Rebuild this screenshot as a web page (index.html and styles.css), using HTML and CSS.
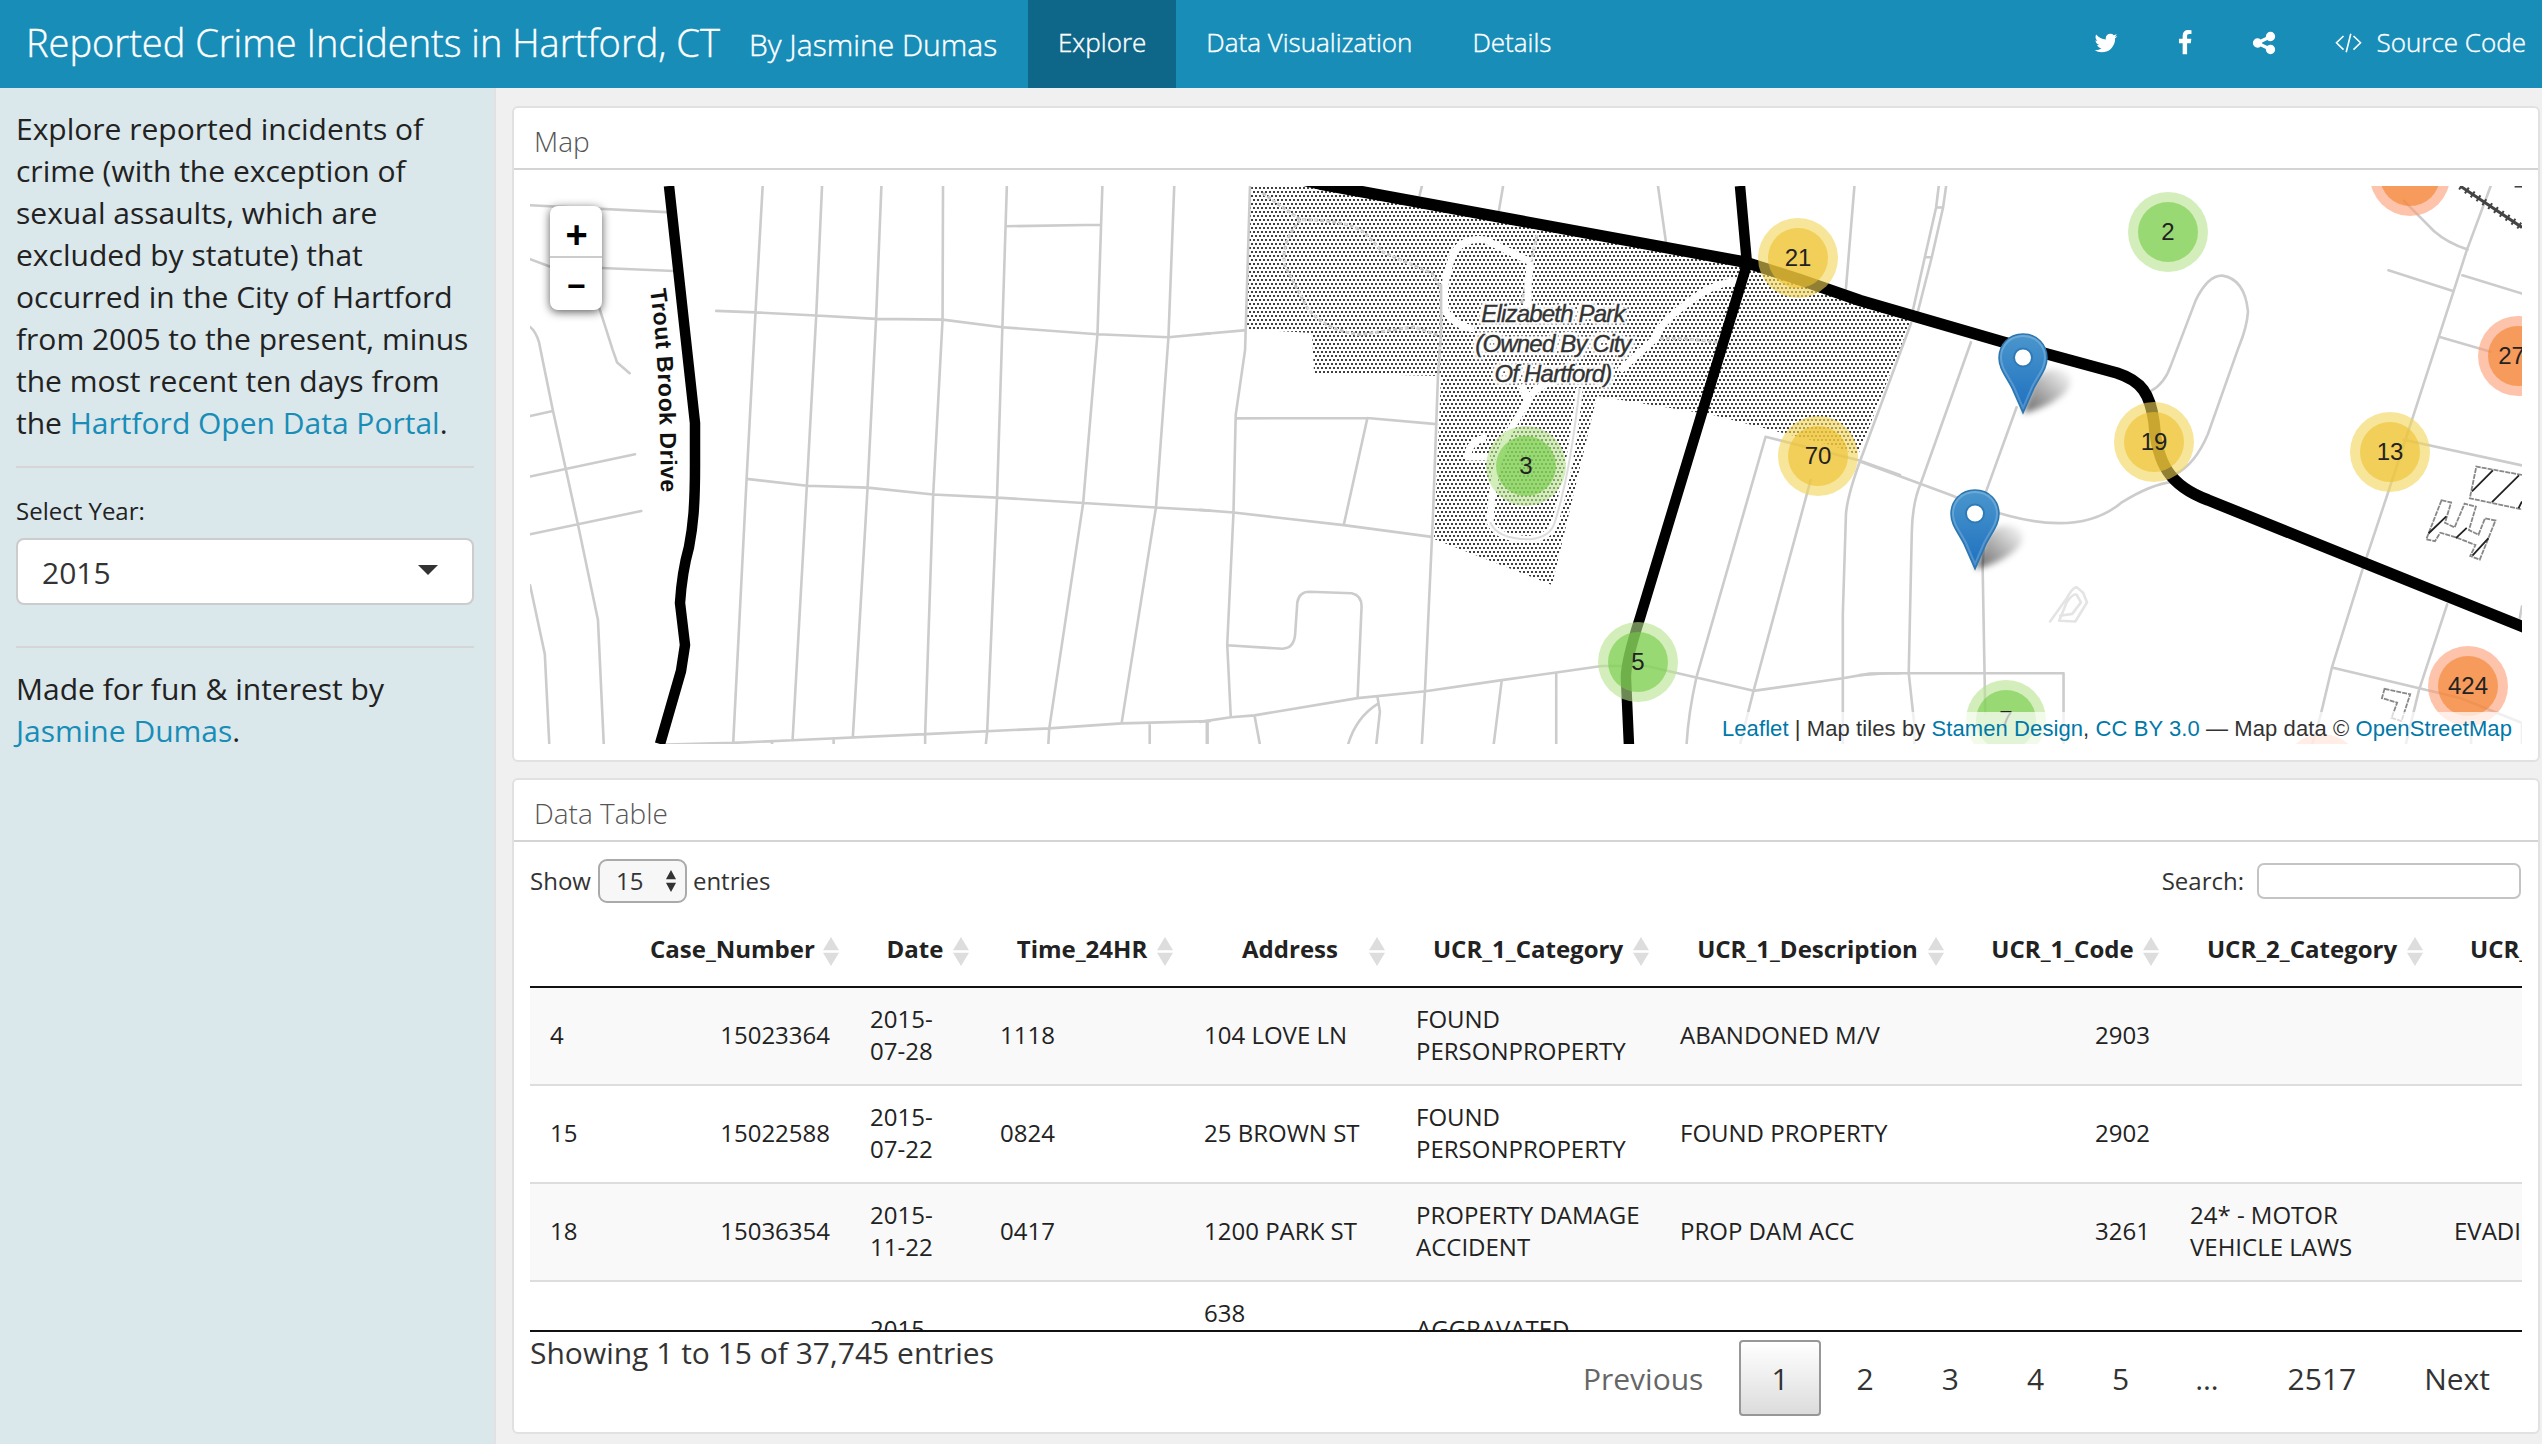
FILE: index.html
```html
<!DOCTYPE html>
<html lang="en">
<head>
<meta charset="utf-8">
<title>Reported Crime Incidents in Hartford, CT</title>
<link rel="stylesheet" href="styles.css">
</head>
<body>
<header class="navbar">
  <a class="brand">Reported Crime Incidents in Hartford, CT</a>
  <span class="byline">By Jasmine Dumas</span>
  <nav class="tabs">
    <a class="tab active">Explore</a>
    <a class="tab">Data Visualization</a>
    <a class="tab">Details</a>
  </nav>
  <div class="social">
    <a class="social-link"><svg class="icon" viewBox="0 0 1792 1792"><path d="M1684 408q-67 98-162 167 1 14 1 42 0 130-38 259.5t-115.5 248.5-184.5 210.5-258 146-323 54.5q-271 0-496-145 35 4 78 4 225 0 401-138-105-2-188-64.5t-114-159.5q33 5 61 5 43 0 85-11-112-23-185.5-111.5t-73.5-205.5v-4q68 38 146 41-66-44-105-115t-39-154q0-88 44-163 121 149 294.5 238.5t371.5 99.5q-8-38-8-74 0-134 94.5-228.5t228.5-94.5q140 0 236 102 109-21 205-78-37 115-142 178 93-10 186-50z"/></svg></a>
    <a class="social-link"><svg class="icon" viewBox="0 0 1792 1792"><path d="M1343 12v264h-157q-86 0-116 36t-30 108v189h293l-39 296h-254v759h-306v-759h-255v-296h255v-218q0-186 104-288.5t277-102.5q147 0 228 12z"/></svg></a>
    <a class="social-link"><svg class="icon" viewBox="0 0 1792 1792"><path d="M1344 1024q133 0 226.5 93.5t93.5 226.5-93.5 226.5-226.5 93.5-226.5-93.5-93.5-226.5q0-12 2-34l-360-180q-92 86-218 86-133 0-226.5-93.5t-93.5-226.5 93.5-226.5 226.5-93.5q126 0 218 86l360-180q-2-22-2-34 0-133 93.5-226.5t226.5-93.5 226.5 93.5 93.5 226.5-93.5 226.5-226.5 93.5q-126 0-218-86l-360 180q2 22 2 34t-2 34l360 180q92-86 218-86z"/></svg></a>
    <a class="source"><svg class="code" viewBox="0 0 27 20"><path d="M8.5 3L1.5 9.8L8.5 16.6M18.500 3L25.500 9.800L18.500 16.600M15.800 .8L11.200 19.200"/></svg>Source Code</a>
  </div>
</header>

<div class="layout">
  <aside class="sidebar">
    <p>Explore reported incidents of crime (with the exception of sexual assaults, which are excluded by statute) that occurred in the City of Hartford from 2005 to the present, minus the most recent ten days from the <a>Hartford Open Data Portal</a>.</p>
    <hr>
    <label class="year-label">Select Year:</label>
    <div class="year-select"><span>2015</span><i class="caret"></i></div>
    <hr class="second">
    <p>Made for fun &amp; interest by <a>Jasmine Dumas</a>.</p>
  </aside>

  <main class="content">
    <section class="card map-card">
      <h2>Map</h2>
      <div class="map">
        <svg class="tiles" width="1992" height="558" viewBox="0 0 1992 558">
          <defs>
            <pattern id="park" width="4" height="8" patternUnits="userSpaceOnUse">
              <path fill="#404040" d="M1 1h2v2H1zM0 5h1v2H0zM3 5h1v2H3z"/>
            </pattern>
          </defs>
          <path fill="url(#park)" d="M720 0H775L1214.600 74L1381 135L1328 269L1304 260L1183 229L1067 210L1022 399L904 353L911 190L784 187L782 147L716 143Z"/>
          <g class="trail" transform="translate(670 -16) scale(.4464 .3827)">
            <path class="dotted" d="M140 60L225 130Q330 130 370 165L410 215L520 270L540 310M225 130Q180 190 190 250L240 360Q280 420 360 430L480 410L540 435M755 170L720 350M1030 440H1080L1160 450"/>
            <path d="M740 240L640 183Q590 175 570 215Q540 290 550 370Q575 410 615 415M740 240L735 300V360M720 560L735 600L690 690Q655 780 650 920Q665 965 740 965Q785 960 795 920Q830 790 850 570M1200 290Q1140 300 1090 350Q1030 400 1020 440L940 525M640 700Q600 710 600 750H650M740 590Q760 560 800 550"/>
            <path class="edge" d="M650 920Q665 965 740 965Q785 960 795 920Q830 790 850 570"/>
          </g>
          <g class="street" transform="translate(-20 -16) scale(.4464 .3827)">
            <path d="M45 92L350 110M45 233L95 255M205 256L368 264M200 360L230 470L240 503L268 531M45 410Q58 422 65 450L96 628L152 925L197 1175L210 1500M45 643L96 630M45 801L280 743M45 952L294 891M45 1085L78 1265L88 1500M566 42L550 372L530 807L500 1497M699 42L686 380L665 825L633 1490M832 42L820 389L801 830L768 1482M970 42L969 391L948 848L930 1474V1500M1113 42L1103 411L1091 856L1069 1466L1066 1500M1327 42L1316 429L1284 870L1208 1459L1206 1500M1488 42L1475 437L1447 882L1370 1446M1110 147L1322 143M462 368L550 372L686 380L820 389L969 391L1103 411L1316 429L1475 437L1568 427M530 807L665 825L801 830L948 848L1091 856L1284 870L1447 882L1568 890M350 1501L500 1497L633 1490L930 1474L1208 1459L1370 1446L1568 1440M1433 1448V1500M1561 1440V1500M725 1486V1500M587 1493V1500"/>
          </g>
          <g class="street" transform="translate(670 -16) scale(.4464 .3827)">
            <path d="M112 42L101 470L80 640L75 895L61 1240L69 1430M0 429L98 419M80 649L375 648L530 664M375 648L322 928M0 888L75 895L322 928L515 958M540 300V420L533 540L522 900L504 1360L497 1500M61 1242L185 1251Q210 1250 213 1215L218 1130Q222 1102 245 1102L340 1106Q362 1112 362 1140L353 1380M0 1442L69 1430L122 1425L353 1380L505 1362L676 1333L798 1313L900 1296L1000 1296L1112 1326L1240 1361L1440 1328L1500 1316L1568 1315M17 1442V1500M122 1425L134 1500M398 1395Q350 1430 332 1500M398 1380L403 1415L395 1500M676 1333L658 1500M798 1313V1500M497 42L492 66M679 42L669 110M1026 42L1044 190M1466 42L1447 310M1568 797L1480 760L1267 697L1112 1326Q1094 1420 1090 1500M1368 810L1240 1361L1210 1500M1593 400L1482 750Q1450 850 1447 900L1440 1160V1500"/>
          </g>
          <g class="street" transform="translate(1330 -16) scale(.43495 .38265)">
            <path d="M181 42L175 98L149 228L118 385M198 42L191 98L165 228L133 370M175 98H191M149 228H165M255 450L140 818Q120 870 119 950L112 1315L125 1450V1500M360 620L290 840L282 1040L288 1420M0 762L210 850Q480 985 600 870Q670 820 720 815M668 578Q700 560 715 510L772 340Q800 275 833 276Q885 285 892 370Q890 410 870 465L800 690Q770 770 725 795M0 1320L60 1315H468V1500M1450 42L1395 210L1365 316L1270 650L1215 840L1155 1045L1085 1300L1060 1420L1040 1500M1250 80L1320 160Q1350 190 1397 208M1215 262L1365 317M1385 275L1522 323M1335 437L1450 475M1250 705L1522 772M1350 1135L1285 1360L1255 1500M1085 1300L1380 1380L1522 1445V1500M1405 1450V1500M1517 1170L1522 1140"/>
            <path class="faint" d="M437 1180L475 1120Q492 1085 500 1092L513 1105L522 1130L495 1180L458 1178L475 1130Q490 1105 498 1110L508 1130L488 1160L460 1165"/>
          </g>
          <g class="building" transform="translate(1330 -16) scale(.43495 .38265)">
            <path d="M1522 797L1417 775L1402 858L1522 887M1337 863L1359 869L1345 922L1367 934L1390 872L1416 880L1400 941L1422 953L1437 910L1461 916L1425 1018L1403 1009L1415 980L1370 960L1334 948L1322 970L1302 965ZM1206 1356L1265 1370L1245 1440L1222 1432L1235 1392L1200 1380Z"/>
            <path class="hatch" d="M1455 785L1407 840M1515 798L1453 868M1522 866L1514 884M1348 905L1307 950M1395 935L1370 962M1445 962L1408 1008"/>
            <path class="rail" d="M1380 42L1522 150"/><path class="ties" d="M1380 42L1522 150"/><path class="rail" d="M1505 42H1522"/>
          </g>
          <path class="road" d="M139 0L165 237V279C165 321 163 340 159 361Q152 386 150 417L155 459L151 485L130 558"/>
          <path class="road" d="M1210 0L1217 78L1110 432Q1095 478 1096 493L1099 560"/>
          <path class="road wide" d="M760 -9L790 -2L1214.600 76L1268 93L1330 114.500L1473 156L1587 187C1612 195 1620 208 1624 236C1627 278 1640 300 1678 314L1996 442"/>
          <path id="trout" fill="none" d="M120 104Q130 170 131 312"/>
          <text class="road-name"><textPath href="#trout" textLength="203">Trout Brook Drive</textPath></text>
        </svg>
        <div class="park-name">Elizabeth Park<br>(Owned By City<br>Of Hartford)</div>

        <div class="cluster medium" style="left:1268px;top:72px"><b>21</b></div>
        <div class="cluster medium" style="left:1288px;top:270px"><b>70</b></div>
        <div class="cluster small" style="left:996px;top:280px"><b>3</b></div>
        <div class="cluster small" style="left:1108px;top:476px"><b>5</b></div>
        <div class="cluster small" style="left:1638px;top:46px"><b>2</b></div>
        <div class="cluster large" style="left:1880px;top:-10px"><b></b></div>
        <div class="cluster large cut" style="left:1988px;top:170px"><b>27</b></div>
        <div class="cluster medium" style="left:1624px;top:256px"><b>19</b></div>
        <div class="cluster medium" style="left:1860px;top:266px"><b>13</b></div>
        <div class="cluster large" style="left:1938px;top:500px"><b>424</b></div>
        <div class="cluster small" style="left:1476px;top:534px"><b>7</b></div>
        <div class="cluster large" style="left:1792px;top:588px"><b></b></div>

        <svg class="pins" width="1992" height="558" viewBox="0 0 1992 558">
          <defs>
            <linearGradient id="pinFill" x1="0" y1="0" x2="0" y2="1"><stop offset="0" stop-color="#4a96cd"/><stop offset="1" stop-color="#1e70bf"/></linearGradient>
            <linearGradient id="shade" x1="0" y1="1" x2="1" y2="0"><stop offset="0" stop-color="#000" stop-opacity=".6"/><stop offset="1" stop-color="#000" stop-opacity="0"/></linearGradient>
            <filter id="soft" x="-50%" y="-50%" width="200%" height="200%"><feGaussianBlur stdDeviation="3"/></filter>
            <g id="pin">
              <path fill="url(#shade)" filter="url(#soft)" d="M25 80L36 46Q52 30 70 40Q78 52 62 64Q46 76 25 80Z"/>
              <path fill="url(#pinFill)" stroke="#2c77b0" stroke-width="1.500" d="M25 1C11 1 1 11.500 1 25C1 36 8 43 14 55L25 80L36 55C42 43 49 36 49 25C49 11.500 39 1 25 1Z"/>
              <path fill="none" stroke="#fff" stroke-opacity=".2" stroke-width="2" d="M25 3C12 3 3 12.500 3 25C3 35 10 42 16 54L25 75L34 54C40 42 47 35 47 25C47 12.500 38 3 25 3Z"/>
              <circle cx="25" cy="24.500" r="9" fill="#fff" stroke="#2f7ab6" stroke-width="2"/>
            </g>
          </defs>
          <use href="#pin" x="1468" y="147"/>
          <use href="#pin" x="1420" y="303"/>
        </svg>

        <div class="zoom"><a>+</a><a>−</a></div>
        <div class="attribution"><a>Leaflet</a> | Map tiles by <a>Stamen Design</a>, <a>CC BY 3.0</a> — Map data © <a>OpenStreetMap</a></div>
      </div>
    </section>

    <section class="card table-card">
      <h2>Data Table</h2>
      <div class="controls">
        <div class="length">Show <span class="length-select">15<svg viewBox="0 0 12 24"><path d="M6 0L11.500 10H.5ZM6 24L.5 14H11.500Z"/></svg></span> entries</div>
        <div class="search">Search: <span class="search-box"></span></div>
      </div>
      <div class="table-view">
        <table>
          <colgroup><col class="c-id"><col class="c-case"><col class="c-date"><col class="c-time"><col class="c-addr"><col class="c-cat"><col class="c-desc"><col class="c-code"><col class="c-cat2"><col class="c-desc2"></colgroup>
          <thead><tr><th class="plain"></th><th>Case_Number</th><th>Date</th><th>Time_24HR</th><th>Address</th><th>UCR_1_Category</th><th>UCR_1_Description</th><th>UCR_1_Code</th><th>UCR_2_Category</th><th class="last">UCR_</th></tr></thead>
          <tbody>
            <tr class="odd"><td>4</td><td class="num">15023364</td><td>2015-<br>07-28</td><td>1118</td><td>104 LOVE LN</td><td>FOUND PERSONPROPERTY</td><td>ABANDONED M/V</td><td class="num">2903</td><td></td><td></td></tr>
            <tr><td>15</td><td class="num">15022588</td><td>2015-<br>07-22</td><td>0824</td><td>25 BROWN ST</td><td>FOUND PERSONPROPERTY</td><td>FOUND PROPERTY</td><td class="num">2902</td><td></td><td></td></tr>
            <tr class="odd"><td>18</td><td class="num">15036354</td><td>2015-<br>11-22</td><td>0417</td><td>1200 PARK ST</td><td>PROPERTY DAMAGE ACCIDENT</td><td>PROP DAM ACC</td><td class="num">3261</td><td>24* - MOTOR VEHICLE LAWS</td><td class="nowrap">EVADI</td></tr>
            <tr><td></td><td></td><td>2015-<br>&nbsp;</td><td></td><td>638<br>&nbsp;<br>&nbsp;</td><td>AGGRAVATED<br>&nbsp;</td><td></td><td></td><td></td><td></td></tr>
          </tbody>
        </table>
      </div>
      <footer class="table-footer">
        <div class="info">Showing 1 to 15 of 37,745 entries</div>
        <div class="pager"><a class="muted">Previous</a><a class="current">1</a><a>2</a><a>3</a><a>4</a><a>5</a><span class="gap">…</span><a>2517</a><a>Next</a></div>
      </footer>
    </section>
  </main>
</div>
</body>
</html>
```
FILE: styles.css
```css
* { box-sizing: border-box; }

body {
  margin: 0;
  width: 2542px;
  height: 1444px;
  overflow: hidden;
  background: #f0f0f0;
  color: #222;
  font-family: "Open Sans", sans-serif;
  font-size: 30px;
  line-height: 42px;
}

a { text-decoration: none; color: #178db8; }

/* Navigation bar */
.navbar {
  display: flex;
  height: 88px;
  background: #178db8;
  color: #fff;
  font-weight: 300;
  white-space: nowrap;
  -webkit-text-stroke: .4px #fff;
}
.navbar a { color: #fff; }
.brand { width: 724px; padding-left: 26px; font-size: 38px; line-height: 84px; }
.byline { width: 304px; padding-left: 25px; font-size: 30px; line-height: 90px; }
.tabs { display: flex; font-size: 26px; line-height: 84px; }
.tab { padding: 0 30px; }
.tab.active { background: #0e6688; }
.social { display: flex; align-items: center; margin-left: auto; padding-right: 16px; font-size: 26px; line-height: 84px; height: 84px; }
.social-link { display: flex; width: 26px; margin-right: 53px; padding-top: 2px; }
.icon { width: 26px; height: 26px; fill: #fff; }
.source { display: flex; align-items: center; gap: 15px; margin-left: 5px; }
.code { width: 27px; height: 20px; margin-top: 2px; fill: none; stroke: #fff; stroke-width: 1.6; }

.layout { display: flex; height: 1356px; }

/* Sidebar */
.sidebar {
  width: 496px;
  padding: 20px 20px 0 16px;
  background: #dae7eb;
  border-right: 2px solid #e2e2e2;
}
.sidebar p { margin: 0; }
.sidebar hr { width: 458px; height: 2px; margin: 22px 0; border: 0; background: #d5d5d8; }
.year-label { display: block; height: 48px; font-size: 24px; }
.year-select {
  display: flex;
  align-items: center;
  justify-content: space-between;
  height: 67px;
  padding: 0 34px 0 24px;
  background: #fff;
  border: 2px solid #ccc;
  border-radius: 8px;
  color: #333;
}
.year-select span { padding-top: 2px; }
.caret { border: 10px solid transparent; border-top-color: #333; border-bottom: 0; margin-bottom: 3px; }
.sidebar hr.second { margin: 41px 0 20px; }

/* Cards */
.content { flex: 1; padding: 18px 2px 0 16px; }
.card { background: #fff; border: 2px solid #e1e1e1; border-radius: 6px; }
.card h2 {
  margin: 0;
  height: 62px;
  padding: 0 0 0 20px;
  border-bottom: 2px solid #d4d4d4;
  color: #555;
  font-size: 28px;
  font-weight: 300;
  line-height: 67px;
}
.map-card { height: 656px; }
.table-card { height: 656px; margin-top: 16px; }

/* Map */
.map { position: relative; width: 1992px; height: 558px; margin: 16px 0 0 16px; overflow: hidden; font-family: "Liberation Sans", Arial, sans-serif; }
.tiles, .pins { position: absolute; left: 0; top: 0; }
.tiles path { vector-effect: non-scaling-stroke; }
.street path { fill: none; stroke: #ccc; stroke-width: 2.6; stroke-linejoin: round; stroke-linecap: round; }
.street .faint { stroke: #e4e4e4; }
.trail path { fill: none; stroke: #fff; stroke-width: 7; stroke-linejoin: round; }
.trail .dotted { stroke: #ccc; stroke-width: 3; stroke-dasharray: 4 2; }
.trail .edge { stroke: #ddd; stroke-width: 2; }
.building path { fill: none; stroke: #888; stroke-width: 1.8; stroke-dasharray: 5 1; }
.building .hatch { stroke: #222; stroke-dasharray: none; }
.building .rail { stroke: #444; stroke-width: 3; stroke-dasharray: none; }
.building .ties { stroke: #444; stroke-width: 7; stroke-dasharray: 2 5; }
.road { fill: none; stroke: #000; stroke-width: 10.5; stroke-linejoin: round; }
.road.wide { stroke-width: 11.5; }
.road-name { font-size: 23px; font-weight: bold; fill: #111; }
.park-name {
  position: absolute;
  left: 923px;
  top: 113px;
  width: 200px;
  color: #333;
  font-size: 24px;
  font-style: italic;
  letter-spacing: -.8px;
  line-height: 30px;
  text-align: center;
  -webkit-text-stroke: .4px #333;
  text-shadow: 0 0 3px #fff, 2px 0 2px #fff, -2px 0 2px #fff, 0 2px 2px #fff, 0 -2px 2px #fff, 3px 3px 2px #fff, -3px -3px 2px #fff, 3px -3px 2px #fff, -3px 3px 2px #fff, 0 0 4px #fff;
}

.cluster {
  position: absolute;
  display: flex;
  align-items: center;
  justify-content: center;
  width: 80px;
  height: 80px;
  margin: -40px 0 0 -40px;
  border-radius: 50%;
}
.cluster b { width: 60px; height: 60px; border-radius: 50%; font-size: 24px; font-weight: normal; line-height: 60px; text-align: center; }
.cluster.cut b { padding-right: 13px; }
.small { background: rgba(181, 226, 140, .6); }
.small b { background: rgba(115, 204, 70, .6); }
.medium { background: rgba(241, 211, 87, .6); }
.medium b { background: rgba(236, 191, 45, .6); }
.large { background: rgba(253, 156, 115, .6); }
.large b { background: rgba(241, 128, 40, .6); }

.zoom { position: absolute; left: 20px; top: 20px; width: 52px; height: 104px; background: #fff; border-radius: 8px; box-shadow: 0 2px 10px rgba(0, 0, 0, .65); }
.zoom a { display: block; height: 52px; padding-left: 1px; color: #000; font-size: 38px; font-weight: bold; line-height: 58px; text-align: center; }
.zoom a:first-child { border-bottom: 2px solid #ccc; }
.zoom a:last-child { font-size: 32px; line-height: 56px; }
.attribution { position: absolute; right: 0; bottom: 0; height: 32px; padding: 0 10px; background: rgba(255, 255, 255, .7); color: #333; font-size: 22px; line-height: 33px; letter-spacing: .09px; white-space: nowrap; }
.attribution a { color: #0078a8; }

/* Data table */
.controls { display: flex; justify-content: space-between; align-items: center; height: 72px; padding: 6px 17px 0 16px; color: #333; font-size: 24px; }
.length, .search { display: flex; align-items: center; }
.length-select { display: flex; align-items: center; justify-content: space-between; width: 89px; height: 44px; margin: 0 6px 0 7px; padding: 0 8px 0 16px; border: 2px solid #aaa; border-radius: 9px; background: #f7f7f7; }
.length-select svg { width: 12px; height: 22px; fill: #333; }
.search-box { width: 264px; height: 36px; margin-left: 13px; border: 2px solid #c4c4c4; border-radius: 7px; }
.table-view { width: 1992px; height: 418px; margin-left: 16px; overflow: hidden; border-bottom: 2px solid #111; }
table { width: 2304px; border-collapse: separate; border-spacing: 0; table-layout: fixed; font-size: 24px; line-height: 32px; }
.c-id { width: 84px; } .c-case { width: 236px; } .c-date { width: 130px; } .c-time { width: 204px; }
.c-addr { width: 212px; } .c-cat { width: 264px; } .c-desc { width: 295px; } .c-code { width: 215px; }
.c-cat2 { width: 264px; } .c-desc2 { width: 400px; }
th { position: relative; height: 74px; padding: 0 36px 2px; border-bottom: 2px solid #111; font-weight: bold; text-align: center; white-space: nowrap; }
th.last { text-align: left; }
th:not(.plain)::after {
  content: "";
  position: absolute;
  right: 11px;
  top: 23px;
  width: 16px;
  height: 29px;
  background: #ddd;
  clip-path: polygon(50% 0, 100% 46%, 0 46%, 0 54%, 100% 54%, 50% 100%, 0 54%, 0 46%);
}
td { padding: 15px 20px 17px; border-top: 2px solid #ddd; vertical-align: middle; }
tbody tr:first-child td { border-top: 0; }
.odd td { background: #f9f9f9; }
.num { text-align: right; }
.nowrap { white-space: nowrap; }

.table-footer { display: flex; justify-content: space-between; padding: 0 16px; color: #333; }
.pager { display: flex; padding-top: 8px; }
.pager > * { height: 76px; margin-left: 4px; padding: 0 30px; border: 2px solid transparent; border-radius: 4px; color: #333; line-height: 74px; }
.pager .gap { padding: 0 31px 0 28px; }
.pager .muted { color: #666; }
.pager .current { border-color: #979797; background: linear-gradient(#fff, #dcdcdc); }
```
